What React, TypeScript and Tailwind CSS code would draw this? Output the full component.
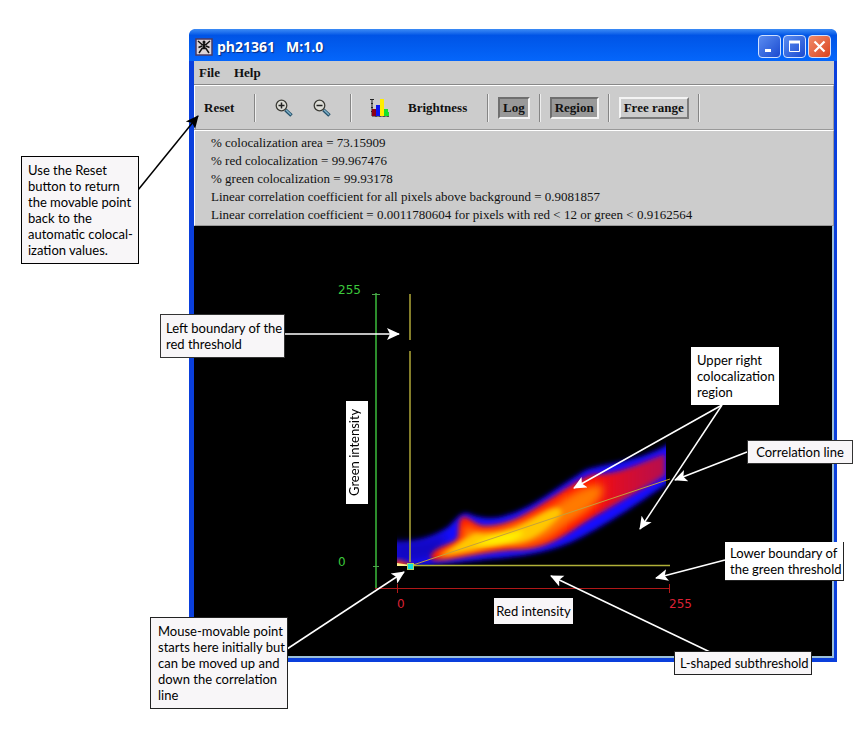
import type { ReactNode } from 'react'
import { cva } from 'class-variance-authority'
import { clsx } from 'clsx'

const results = [
  '% colocalization area = 73.15909',
  '% red colocalization = 99.967476',
  '% green colocalization = 99.93178',
  'Linear correlation coefficient for all pixels above background = 0.9081857',
  'Linear correlation coefficient = 0.0011780604 for pixels with red < 12 or green < 0.9162564',
]

// [x1, y1, x2, y2], the head sits on x2,y2
const arrows = [
  [285, 334, 399, 334],
  [722, 405, 574, 488],
  [722, 405, 640, 529],
  [747, 452, 675, 480],
  [725, 560, 656, 578],
  [710, 652, 551, 576],
  [287, 649, 404, 572],
]

const toolButton = cva('h-[22px] border-2 px-[3px] text-[13px] leading-none font-bold', {
  variants: {
    look: {
      pressed: 'border-t-[#6f6f6f] border-l-[#6f6f6f] border-r-[#f4f4f4] border-b-[#f4f4f4] bg-[#999]',
      raised: 'border-t-[#f4f4f4] border-l-[#f4f4f4] border-r-[#7c7c7c] border-b-[#7c7c7c] bg-[#ccc]',
    },
  },
})

function AppIcon() {
  return (
    <svg className="h-[18px] w-[18px]" viewBox="0 0 18 18">
      <rect x="1" y="1" width="16" height="16" fill="#dcd4d8" />
      <path d="M3 3l4 3.500h4L15 3M9 5v6M4 15l3-4.500h4L14 15M3.500 9.500L7 8M14.500 9.500L11 8" stroke="#111" strokeWidth="1.500" fill="none" />
      <path d="M7.500 6h3v5h-3z" fill="#111" />
      <circle cx="9" cy="4" r="1.500" fill="#111" />
      <rect x="1" y="1" width="16" height="16" fill="none" stroke="#4b3a62" strokeWidth="1.500" />
    </svg>
  )
}

function ZoomIcon({ plus }: { plus?: boolean }) {
  return (
    <svg className="h-[18px] w-[18px]" viewBox="0 0 18 18" fill="none">
      <path d="M10.500 11l6 5.500" stroke="#24516b" strokeWidth="3.600" />
      <path d="M11 11l5 4.800" stroke="#7fb0c8" strokeWidth="1.400" />
      <circle cx="6.500" cy="6.500" r="5.300" fill="#dcdcd6" stroke="#3c3c36" strokeWidth="1.300" />
      <path d={plus ? 'M3.500 6.500h6M6.500 3.500v6' : 'M3.500 6.500h6'} stroke="#222" strokeWidth="1.500" />
    </svg>
  )
}

function HistogramIcon() {
  return (
    <svg className="h-5 w-5" viewBox="0 0 20 20">
      <path d="M0 1.500h4M1 5.500h2M1 9.500h2M1 13.500h2M2 1v17h17M6 17v2M10 17v2M14 17v2M18 17v2" stroke="#222" fill="none" />
      <path d="M2 11h4v7H2z" fill="#8b0016" />
      <path d="M6 7h4v11H6z" fill="#0a14f0" />
      <path d="M10 1h4v17h-4z" fill="#ffee00" />
      <path d="M14 11h4v3h1v4h-5z" fill="#14e02c" />
    </svg>
  )
}

function Separator() {
  return <span className="h-7 w-[2px] border-l border-[#858585] bg-[#eee]" />
}

function CaptionButton({ label, close, children }: { label: string; close?: boolean; children: ReactNode }) {
  return (
    <button
      aria-label={label}
      className={clsx(
        'flex h-[23px] w-[23px] items-center justify-center rounded-[4px] border border-[#cfe0ff] bg-linear-to-br',
        close ? 'from-[#f08a68] to-[#d9401a]' : 'from-[#5b8cf0] to-[#1c48d0]'
      )}
    >
      <svg className="h-[15px] w-[15px]" viewBox="0 0 15 15" fill="none" stroke="#fff">
        {children}
      </svg>
    </button>
  )
}

function TitleBar() {
  return (
    <header className="flex h-8 items-center rounded-t-md bg-linear-to-b from-[#3b8bf5] via-[#0054e6] via-20% to-[#0566fb] px-[6px] pt-[3px] text-white">
      <AppIcon />
      <h1 className="grow pl-1 font-['Open_Sans',sans-serif] text-sm font-bold whitespace-pre [text-shadow:1px_1px_1px_#0a2a80]">
        ph21361   M:1.0
      </h1>
      <div className="flex gap-[2px]">
        <CaptionButton label="Minimize">
          <path d="M3 11.500h6" strokeWidth="3" />
        </CaptionButton>
        <CaptionButton label="Maximize">
          <path d="M2.500 3v9.500h10V3" />
          <path d="M2 3h11" strokeWidth="3" />
        </CaptionButton>
        <CaptionButton label="Close" close>
          <path d="M2.500 2.500l10 10M12.500 2.500l-10 10" strokeWidth="2.200" />
        </CaptionButton>
      </div>
    </header>
  )
}

function Toolbar() {
  return (
    <div className="flex h-[45px] items-center border border-[#999] border-t-white border-l-white pl-[9px] text-[13px] font-bold shadow-[0_-1px_0_#888]">
      <button className="w-[50px] text-left">Reset</button>
      <Separator />
      <div className="flex w-[94px] items-center gap-5 pl-[19px]">
        <button aria-label="Zoom in">
          <ZoomIcon plus />
        </button>
        <button aria-label="Zoom out">
          <ZoomIcon />
        </button>
      </div>
      <Separator />
      <button className="flex w-[135px] items-center gap-[18px] pl-[18px]">
        <HistogramIcon />
        Brightness
      </button>
      <div className="flex items-center gap-[9px]">
        <Separator />
        <button aria-pressed="true" className={toolButton({ look: 'pressed' })}>Log</button>
        <Separator />
        <button aria-pressed="true" className={toolButton({ look: 'pressed' })}>Region</button>
        <Separator />
        <button className={toolButton({ look: 'raised' })}>Free range</button>
        <Separator />
      </div>
    </div>
  )
}

function ScatterPlot() {
  return (
    <svg className="block w-full bg-black" viewBox="194 226 638 430" role="img" aria-label="Red against green intensity">
      <defs>
        <filter id="soft" x="-20%" y="-20%" width="140%" height="140%">
          <feGaussianBlur stdDeviation="2.500" />
        </filter>
        <filter id="softer" x="-20%" y="-20%" width="140%" height="140%">
          <feGaussianBlur stdDeviation="4" />
        </filter>
        <linearGradient id="heat" gradientUnits="userSpaceOnUse" x1="430" y1="0" x2="666" y2="0">
          <stop offset="0" stopColor="#ff1a00" />
          <stop offset=".68" stopColor="#ff1000" />
          <stop offset=".8" stopColor="#dc0c28" />
          <stop offset="1" stopColor="#b40c50" />
        </linearGradient>
        <clipPath id="plot-area">
          <path d="M397 290H666V566H397z" />
        </clipPath>
      </defs>

      {/* pixel density, from sparse to dense */}
      <g clipPath="url(#plot-area)">
        <path
          d="M390 541C410 543 430 539 448 527C455 521 459 513 467 513C474 516 486 520 500 517C530 510 550 492 584 471C600 463 640 463 672 442V480C640 503 610 522 580 538C550 553 525 556 490 559C460 562 440 565 390 568z"
          fill="#1408ff"
          filter="url(#soft)"
        />
        <path d="M394 538C415 543 435 538 448 532L438 557L394 565z" fill="#10006a" opacity=".4" filter="url(#softer)" />
        <path
          d="M431 556C433 549 446 546 456 541C461 536 457 524 461 518C468 514 472 524 482 526C505 528 525 515 545 502C562 492 580 478 594 474C615 476 638 464 665 454V475C640 491 610 507 585 522C560 539 545 548 520 549C490 550 465 557 438 560C433 561 430 559 431 556z"
          fill="url(#heat)"
          filter="url(#soft)"
        />
        <path
          d="M437 556C446 550 460 545 464 538C461 524 466 522 473 529C500 535 530 518 555 505C572 491 592 482 602 485C608 498 585 514 565 526C545 543 530 547 510 546C485 549 460 554 440 558z"
          fill="#ff7a00"
          filter="url(#softer)"
        />
        <path
          d="M438 556C456 546 466 537 476 533C502 537 520 526 543 513C560 503 568 510 556 520C538 538 522 545 505 544C485 547 460 554 438 556z"
          fill="#ffc800"
          filter="url(#soft)"
        />
        <path d="M474 545C488 535 510 533 524 531C519 542 500 545 474 545z" fill="#fff000" filter="url(#soft)" />
        <path d="M395 559L413 565V568H395z" fill="#ff3c00" filter="url(#soft)" />
        <path d="M397 563L410 565V567H397z" fill="#fff08c" />
      </g>

      <g fill="none">
        <path d="M376 293V588" stroke="#2c8c2c" strokeWidth="2" />
        <path d="M372 294.500h8M373 566.500h6" stroke="#4ca44c" />
        <path d="M375 588.500H670" stroke="#b01818" />
        <path d="M397.500 584v9M669.500 584v9" stroke="#b01818" />
        <path d="M410 294V340M410 351V562" stroke="#b0a838" strokeWidth="1.500" />
        <path d="M413 565.500H670" stroke="#b0b038" strokeWidth="1.500" />
        <path d="M413 565L670 479" stroke="#c4a03c" />
      </g>
      <rect x="407.500" y="563.500" width="6" height="6" fill="#10e0e0" stroke="#b4d860" />

      <g className="font-['DejaVu_Sans',sans-serif] text-xs">
        <text x="338" y="294" fill="#3cc83c">255</text>
        <text x="338" y="566" fill="#3cc83c">0</text>
        <text x="397" y="608" fill="#dc2034">0</text>
        <text x="669" y="608" fill="#dc2034">255</text>
      </g>
    </svg>
  )
}

function Note({ className, children }: { className: string; children: ReactNode }) {
  return (
    <p className={clsx('absolute bg-[#f8f6f8] text-[13px] leading-4 whitespace-pre text-black', className)}>
      {children}
    </p>
  )
}

function Annotations() {
  return (
    <div className="font-['Lato',sans-serif]">
      <svg className="pointer-events-none absolute top-0 left-0 h-[731px] w-[861px]" viewBox="0 0 861 731" fill="none">
        <defs>
          <marker id="head" orient="auto" markerUnits="userSpaceOnUse" markerWidth="14" markerHeight="14" refX="12" refY="7">
            <path d="M0 1L13 7L0 13L3 7z" fill="#fff" />
          </marker>
          <marker id="head-dark" orient="auto" markerUnits="userSpaceOnUse" markerWidth="14" markerHeight="14" refX="12" refY="7">
            <path d="M0 1L13 7L0 13L3 7z" fill="#000" />
          </marker>
        </defs>
        <path d="M138 190L198 116" stroke="#000" strokeWidth="1.500" markerEnd="url(#head-dark)" />
        {arrows.map(([x1, y1, x2, y2]) => (
          <path key={`${x1}-${x2}`} d={`M${x1} ${y1}L${x2} ${y2}`} stroke="#fff" strokeWidth="1.500" markerEnd="url(#head)" />
        ))}
      </svg>
      <Note className="top-[156px] left-[21px] w-[118px] border border-black py-[5px] pl-[6px]">
        {'Use the Reset\nbutton to return\nthe movable point\nback to the\nautomatic colocal-\nization values.'}
      </Note>
      <Note className="top-[314px] left-[160px] w-[125px] border border-[#333] py-[5px] pl-[5px]">
        {'Left boundary of the\nred threshold'}
      </Note>
      <Note className="top-[347px] left-[691px] w-[88px] bg-white py-[5px] pl-[6px]">
        {'Upper right\ncolocalization\nregion'}
      </Note>
      <Note className="top-[440px] left-[747px] w-[106px] border border-[#333] py-[3px] text-center">Correlation line</Note>
      <Note className="top-[542px] left-[725px] w-[119px] border-r border-b border-[#222] bg-white py-[3px] pl-[5px]">
        {'Lower boundary of\nthe green threshold'}
      </Note>
      <Note className="top-[651px] left-[674px] w-[138px] border border-[#222] py-[3px] pl-[5px]">L-shaped subthreshold</Note>
      <Note className="top-[617px] left-[150px] w-[138px] border border-[#222] py-[5px] pl-[7px]">
        {'Mouse-movable point\nstarts here initially but\ncan be moved up and\ndown the correlation\nline'}
      </Note>
      <Note className="top-[401px] left-[346px] h-[103px] w-[22px] rotate-180 bg-white px-[3px] text-center [writing-mode:vertical-rl]">
        Green intensity
      </Note>
      <Note className="top-[598px] left-[494px] w-[79px] py-[5px] text-center">Red intensity</Note>
    </div>
  )
}

export default function App() {
  return (
    <main className="relative min-h-screen bg-white pt-[29px] pr-6 pb-[69px] pl-[189px]">
      <section className="rounded-t-lg border-r-[3px] border-b-4 border-l-[5px] border-[#0a3fdc] bg-[#0a3fdc] font-['Liberation_Serif',serif]">
        <div className="-mr-[3px] -ml-[5px]">
          <TitleBar />
        </div>
        <div className="bg-[#ccc] text-[#111]">
          <nav className="flex h-6 items-center gap-[14px] pl-[5px] text-[13px] font-bold">
            <button>File</button>
            <button>Help</button>
          </nav>
          <Toolbar />
          <ul className="border border-[#999] border-t-white border-l-white pt-[3px] pb-px pl-4 text-[13px] leading-[18px] shadow-[0_-1px_0_#999]">
            {results.map((line) => (
              <li key={line}>{line}</li>
            ))}
          </ul>
        </div>
        <div className="border-r-2 border-b-2 border-[#9cc0d8]">
          <ScatterPlot />
        </div>
      </section>
      <Annotations />
    </main>
  )
}
